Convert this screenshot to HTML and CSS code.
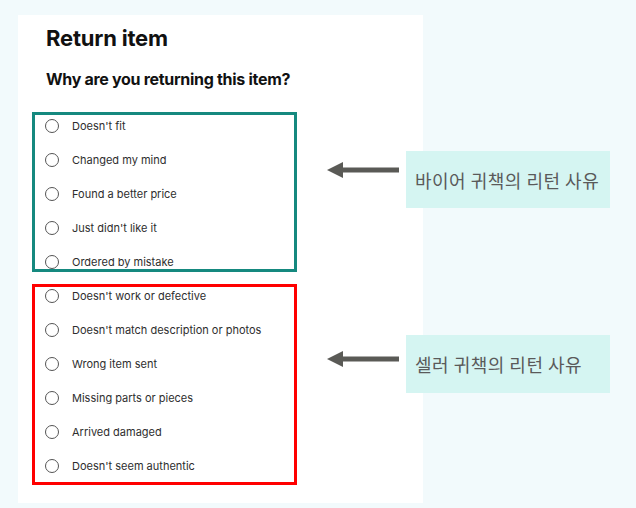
FILE: index.html
```html
<!DOCTYPE html>
<html lang="en">
<head>
<meta charset="utf-8">
<title>Return item</title>
<link rel="stylesheet" href="styles.css">
</head>
<body>
<div class="page">
  <section class="panel">
    <h1 class="title">Return item</h1>
    <h2 class="question">Why are you returning this item?</h2>
    <div class="group group-buyer">
      <label class="opt"><span class="radio"></span>Doesn't fit</label>
      <label class="opt"><span class="radio"></span>Changed my mind</label>
      <label class="opt"><span class="radio"></span>Found a better price</label>
      <label class="opt"><span class="radio"></span>Just didn't like it</label>
      <label class="opt"><span class="radio"></span>Ordered by mistake</label>
    </div>
    <div class="group group-seller">
      <label class="opt"><span class="radio"></span>Doesn't work or defective</label>
      <label class="opt"><span class="radio"></span>Doesn't match description or photos</label>
      <label class="opt"><span class="radio"></span>Wrong item sent</label>
      <label class="opt"><span class="radio"></span>Missing parts or pieces</label>
      <label class="opt"><span class="radio"></span>Arrived damaged</label>
      <label class="opt"><span class="radio"></span>Doesn't seem authentic</label>
    </div>
  </section>

  <div class="callout callout-buyer">
    <svg class="arrow" width="72" height="18" viewBox="0 0 72 18"><polygon points="0,9 16,1 16,17" fill="#5a5a56"/><rect x="14" y="6.5" width="58" height="5" fill="#5a5a56"/></svg>
    <div class="note">바이어 귀책의 리턴 사유</div>
  </div>
  <div class="callout callout-seller">
    <svg class="arrow" width="72" height="18" viewBox="0 0 72 18"><polygon points="0,9 16,1 16,17" fill="#5a5a56"/><rect x="14" y="6.5" width="58" height="5" fill="#5a5a56"/></svg>
    <div class="note">셀러 귀책의 리턴 사유</div>
  </div>
</div>
</body>
</html>
```

FILE: styles.css
```css
html, body {
  margin: 0;
  padding: 0;
}
body {
  background: #f2fafc;
  font-family: Inter, "Liberation Sans", sans-serif;
  color: #222;
}
.page {
  position: relative;
  width: 636px;
  height: 508px;
  overflow: hidden;
}
.panel {
  margin: 15px 0 0 18px;
  width: 405px;
  box-sizing: border-box;
  background: #fff;
  padding: 9px 0 18px 14px;
}
.title {
  margin: 0 0 17px 14px;
  font-size: 22px;
  line-height: 28px;
  font-weight: 700;
  color: #111;
  letter-spacing: -0.2px;
}
.question {
  margin: 0 0 23px 14px;
  font-size: 16px;
  line-height: 20px;
  font-weight: 700;
  color: #111;
  letter-spacing: -0.3px;
}
.group {
  width: 265px;
  box-sizing: border-box;
  display: flex;
  flex-direction: column;
  gap: 20px;
}
.group-buyer {
  border: 3px solid #15897f;
  padding: 4px 0 0 10px;
}
.group-seller {
  margin-top: 12px;
  border: 3px solid #ff0000;
  padding: 2px 0 9px 10px;
}
.opt {
  display: flex;
  align-items: center;
  height: 14px;
  font-size: 11px;
  color: #2e2e2e;
  white-space: nowrap;
}
.radio {
  width: 14px;
  height: 14px;
  box-sizing: border-box;
  border: 1.5px solid #555;
  border-radius: 50%;
  margin-right: 13px;
  flex: none;
}
.callout {
  position: absolute;
  left: 327px;
  display: flex;
  align-items: flex-start;
}
.callout-buyer { top: 151px; }
.callout-seller { top: 335px; }
.arrow { display: block; flex: none; }
.callout-buyer .arrow { margin-top: 10px; }
.callout-seller .arrow { margin-top: 15px; }
.note {
  margin-left: 7px;
  width: 204px;
  box-sizing: border-box;
  padding-left: 9px;
  background: #d5f5f2;
  color: #5a5a5a;
  font-family: "Noto Sans CJK KR", sans-serif;
  font-size: 18px;
  letter-spacing: 0.5px;
  font-weight: 400;
  display: flex;
  align-items: center;
}
.callout-buyer .note { height: 57px; }
.callout-seller .note { height: 58px; }
```
